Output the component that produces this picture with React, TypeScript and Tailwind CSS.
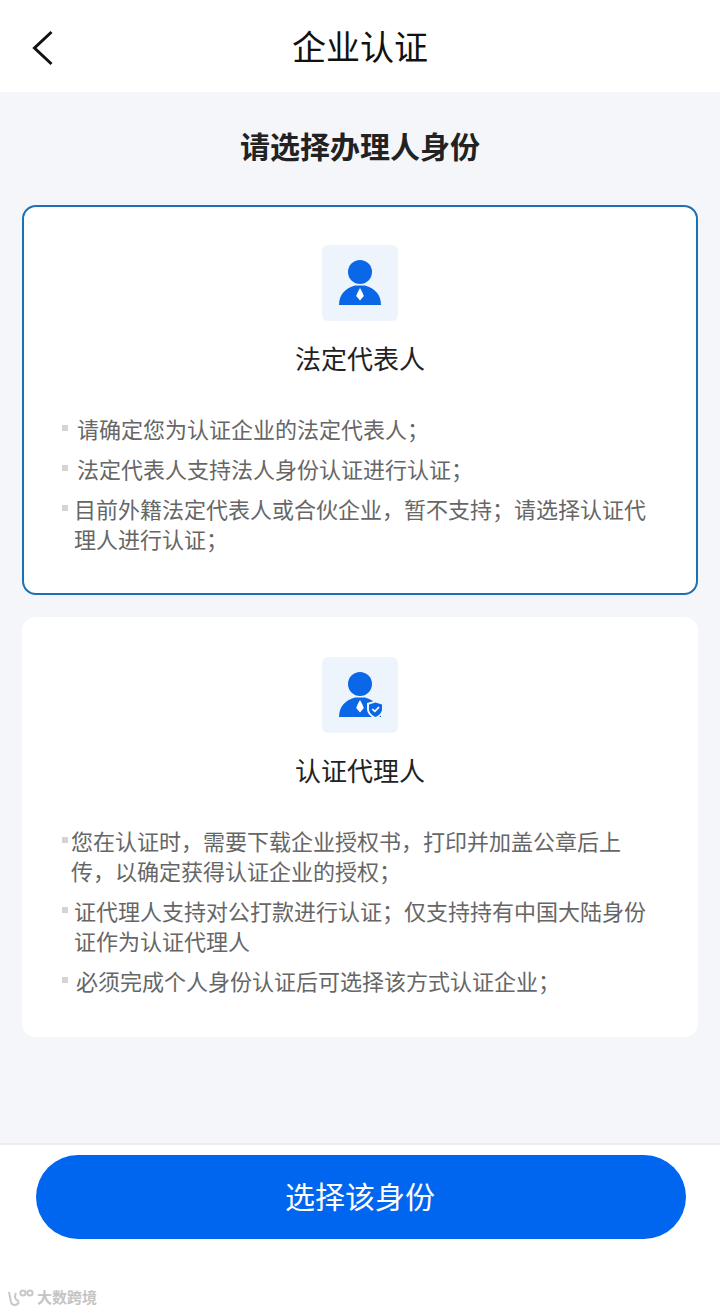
const FONT = 'font-["Liberation_Sans","Noto_Sans_CJK_SC",sans-serif]'

function Person({ shield }: { shield?: boolean }) {
  return (
    <div className="w-[76px] h-[76px] rounded-[6px] bg-[#eef4fc]">
      <svg width="76" height="76" viewBox="0 0 76 76">
        <circle cx="38" cy="27" r="12" fill="#0a67e8" />
        <path d="M17 60 C17 50 23 43 33 40.5 L43 40.5 C53 43 59 50 59 60 Z" fill="#0a67e8" />
        <path d="M38 43 L40.2 47 L41.8 51 L38 55.5 L34.2 51 L35.8 47 Z" fill="#fff" />
        {shield && (
          <>
            <path d="M53.5 43.5 L62 46 L62 52 C62 56.5 58.5 59.5 53.5 62 C48.5 59.5 45 56.5 45 52 L45 46 Z" fill="#eef4fc" />
            <path d="M53.5 45.5 L60 47.5 L60 52 C60 55.5 57.5 58 53.5 60 C49.5 58 47 55.5 47 52 L47 47.5 Z" fill="#0a67e8" />
            <path d="M50.3 52 L52.8 54.4 L57 50.2" fill="none" stroke="#fff" strokeWidth="1.7" />
          </>
        )}
      </svg>
    </div>
  )
}

function Item({ text, indent }: { text: string; indent: string }) {
  return (
    <div className="relative">
      <span className="absolute left-0 top-[9px] w-[6px] h-[6px] bg-[#d4d4d4]" />
      <p className={`${indent} text-[22px] leading-[30px] text-[#666]`}>{text}</p>
    </div>
  )
}

export default function App() {
  return (
    <div className={`${FONT} relative w-[720px] h-[1313px] flex flex-col bg-[#f4f6fa]`}>
      {/* Header */}
      <div className="h-[92px] shrink-0 bg-white pt-[4px] grid grid-cols-[1fr_auto_1fr] items-center">
        <svg className="ml-[31px]" width="24" height="36" viewBox="0 0 24 36" fill="none">
          <path d="M20.5 2 L3.5 18 L20.5 34" stroke="#111" strokeWidth="3" />
        </svg>
        <h1 className="text-[34px] leading-[44px] text-[#111]">企业认证</h1>
        <div />
      </div>

      {/* Body */}
      <div className="flex-1 px-[22px]">
        <h2 className="mt-[38px] mb-[39px] text-center text-[30px] leading-[36px] font-bold text-[#222]">请选择办理人身份</h2>

        <div className="h-[390px] rounded-[14px] border-2 border-[#1c70b4] bg-white pt-[38px] pl-[38px] pr-[48px]">
          <div className="flex flex-col items-center ml-[-10px] mr-[-20px]">
            <Person />
            <div className="mt-[24px] text-[26px] leading-[30px] text-[#222]">法定代表人</div>
          </div>
          <div className="mt-[41px] flex flex-col gap-[10px]">
            <Item indent="pl-[15px]" text="请确定您为认证企业的法定代表人；" />
            <Item indent="pl-[15px]" text="法定代表人支持法人身份认证进行认证；" />
            <Item indent="pl-[12px]" text="目前外籍法定代表人或合伙企业，暂不支持；请选择认证代理人进行认证；" />
          </div>
        </div>

        <div className="mt-[22px] h-[420px] rounded-[14px] bg-white pt-[40px] pl-[40px] pr-[50px]">
          <div className="flex flex-col items-center ml-[-12px] mr-[-22px]">
            <Person shield />
            <div className="mt-[24px] text-[26px] leading-[30px] text-[#222]">认证代理人</div>
          </div>
          <div className="mt-[41px] flex flex-col gap-[10px]">
            <Item indent="pl-[9px]" text="您在认证时，需要下载企业授权书，打印并加盖公章后上传，以确定获得认证企业的授权；" />
            <Item indent="pl-[12px]" text="证代理人支持对公打款进行认证；仅支持持有中国大陆身份证作为认证代理人" />
            <Item indent="pl-[14px]" text="必须完成个人身份认证后可选择该方式认证企业；" />
          </div>
        </div>
      </div>

      {/* Footer */}
      <div className="h-[170px] shrink-0 border-t-2 border-[#ececee] bg-white pt-[10px] pl-[36px]">
        <button className="w-[650px] h-[84px] rounded-full bg-[#0066f0] pr-[2px] text-[30px] text-white">选择该身份</button>
      </div>

      {/* Watermark */}
      <div className="absolute left-[7px] bottom-[6px] flex items-center gap-[3px] text-[#c4c4c4]">
        <svg width="27" height="18" viewBox="0 0 27 18" fill="none" stroke="#c8c8c8" strokeWidth="2">
          <path d="M2 3 L4 13 C5 17 10 17 12 13 M9 4 C7 8 8 11 12 12" />
          <circle cx="16" cy="4" r="2.6" />
          <circle cx="23" cy="4" r="2.6" />
        </svg>
        <span className="text-[15px] leading-[18px] font-bold">大数跨境</span>
      </div>
    </div>
  )
}
